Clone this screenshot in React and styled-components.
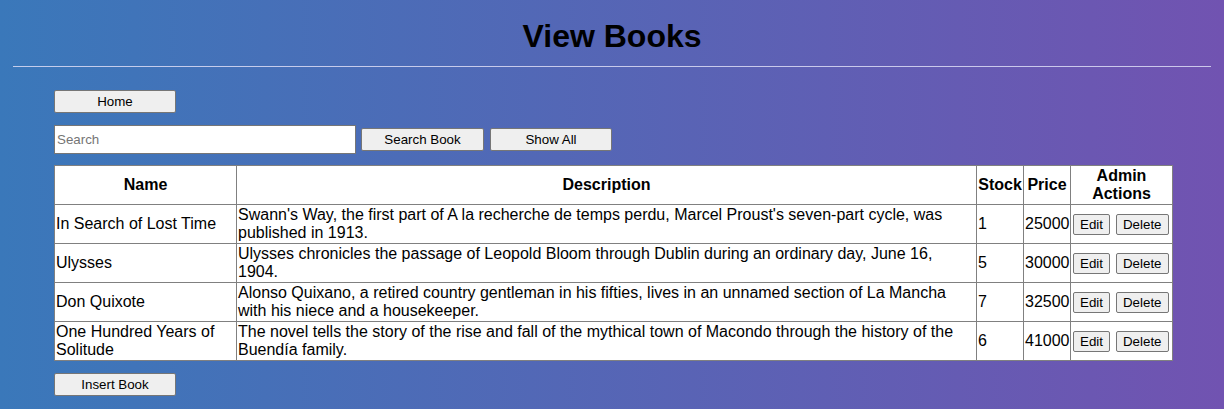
import React from 'react'
import styled, { createGlobalStyle } from 'styled-components'

const GlobalStyle = createGlobalStyle`
  html, body {
    margin: 0;
    padding: 0;
  }
  body {
    font-family: 'Liberation Sans', Arial, sans-serif;
    background: linear-gradient(to right, #3a78ba, #7153b1);
    min-height: 100vh;
  }
`

const Page = styled.div`
  min-height: 409px;
  padding: 0 13px 14px;
  box-sizing: border-box;
`

const Title = styled.h1`
  margin: 0;
  padding: 18px 0 11px;
  text-align: center;
  font-size: 32px;
  line-height: 37px;
  font-weight: bold;
  color: #000;
`

const Rule = styled.hr`
  margin: 0;
  border: none;
  border-top: 1px solid rgba(220, 220, 245, 0.85);
`

const Content = styled.div`
  display: flex;
  flex-direction: column;
  align-items: flex-start;
  padding: 23px 0 0 41px;
  gap: 12px;
`

const Button = styled.button`
  font-family: 'Liberation Sans', Arial, sans-serif;
  font-size: 13.33px;
  color: #000;
  background: #efefef;
  border: 1px solid #767676;
  border-radius: 2px;
  width: ${(props) => props.width || 'auto'};
  height: ${(props) => props.height || '23px'};
  padding: 1px 6px;
  cursor: pointer;
`

const SearchRow = styled.div`
  display: flex;
  align-items: center;
  gap: 6px;
`

const SearchInput = styled.input`
  width: 302px;
  height: 29px;
  box-sizing: border-box;
  border: 1px solid #767676;
  border-radius: 0;
  padding: 1px 2px;
  font-family: 'Liberation Sans', Arial, sans-serif;
  font-size: 13.33px;
  margin-right: -1px;
  &::placeholder {
    color: #757575;
  }
`

const Table = styled.table`
  border-collapse: collapse;
  table-layout: fixed;
  background: #fff;
  width: 1118px;
  font-size: 16px;
  color: #000;
  margin-top: -1px;
`

const Col = styled.col`
  width: ${(props) => props.width};
`

const Th = styled.th`
  border: 1px solid #808080;
  padding: 1px;
  height: 36px;
  font-weight: bold;
  text-align: center;
  line-height: 18px;
`

const Td = styled.td`
  border: 1px solid #808080;
  padding: 1px;
  height: 36px;
  text-align: left;
  line-height: 18px;
  vertical-align: middle;
`

const Actions = styled.div`
  display: flex;
  align-items: center;
  gap: 6px;
  padding-left: 1px;
`

const books = [
  {
    name: 'In Search of Lost Time',
    description:
      "Swann's Way, the first part of A la recherche de temps perdu, Marcel Proust's seven-part cycle, was published in 1913.",
    stock: 1,
    price: 25000,
  },
  {
    name: 'Ulysses',
    description:
      'Ulysses chronicles the passage of Leopold Bloom through Dublin during an ordinary day, June 16, 1904.',
    stock: 5,
    price: 30000,
  },
  {
    name: 'Don Quixote',
    description:
      'Alonso Quixano, a retired country gentleman in his fifties, lives in an unnamed section of La Mancha with his niece and a housekeeper.',
    stock: 7,
    price: 32500,
  },
  {
    name: 'One Hundred Years of Solitude',
    description:
      'The novel tells the story of the rise and fall of the mythical town of Macondo through the history of the Buendía family.',
    stock: 6,
    price: 41000,
  },
]

export default function App() {
  return (
    <Page>
      <GlobalStyle />
      <Title>View Books</Title>
      <Rule />
      <Content>
        <Button width='122px'>Home</Button>
        <SearchRow>
          <SearchInput placeholder='Search' />
          <Button width='123px'>Search Book</Button>
          <Button width='122px'>Show All</Button>
        </SearchRow>
        <Table>
          <colgroup>
            <Col width='182px' />
            <Col width='740px' />
            <Col width='47px' />
            <Col width='47px' />
            <Col width='102px' />
          </colgroup>
          <thead>
            <tr>
              <Th>Name</Th>
              <Th>Description</Th>
              <Th>Stock</Th>
              <Th>Price</Th>
              <Th>Admin Actions</Th>
            </tr>
          </thead>
          <tbody>
            {books.map((book) => (
              <tr key={book.name}>
                <Td>{book.name}</Td>
                <Td>{book.description}</Td>
                <Td>{book.stock}</Td>
                <Td>{book.price}</Td>
                <Td>
                  <Actions>
                    <Button height='21px'>Edit</Button>
                    <Button height='21px'>Delete</Button>
                  </Actions>
                </Td>
              </tr>
            ))}
          </tbody>
        </Table>
        <Button width='122px'>Insert Book</Button>
      </Content>
    </Page>
  )
}
